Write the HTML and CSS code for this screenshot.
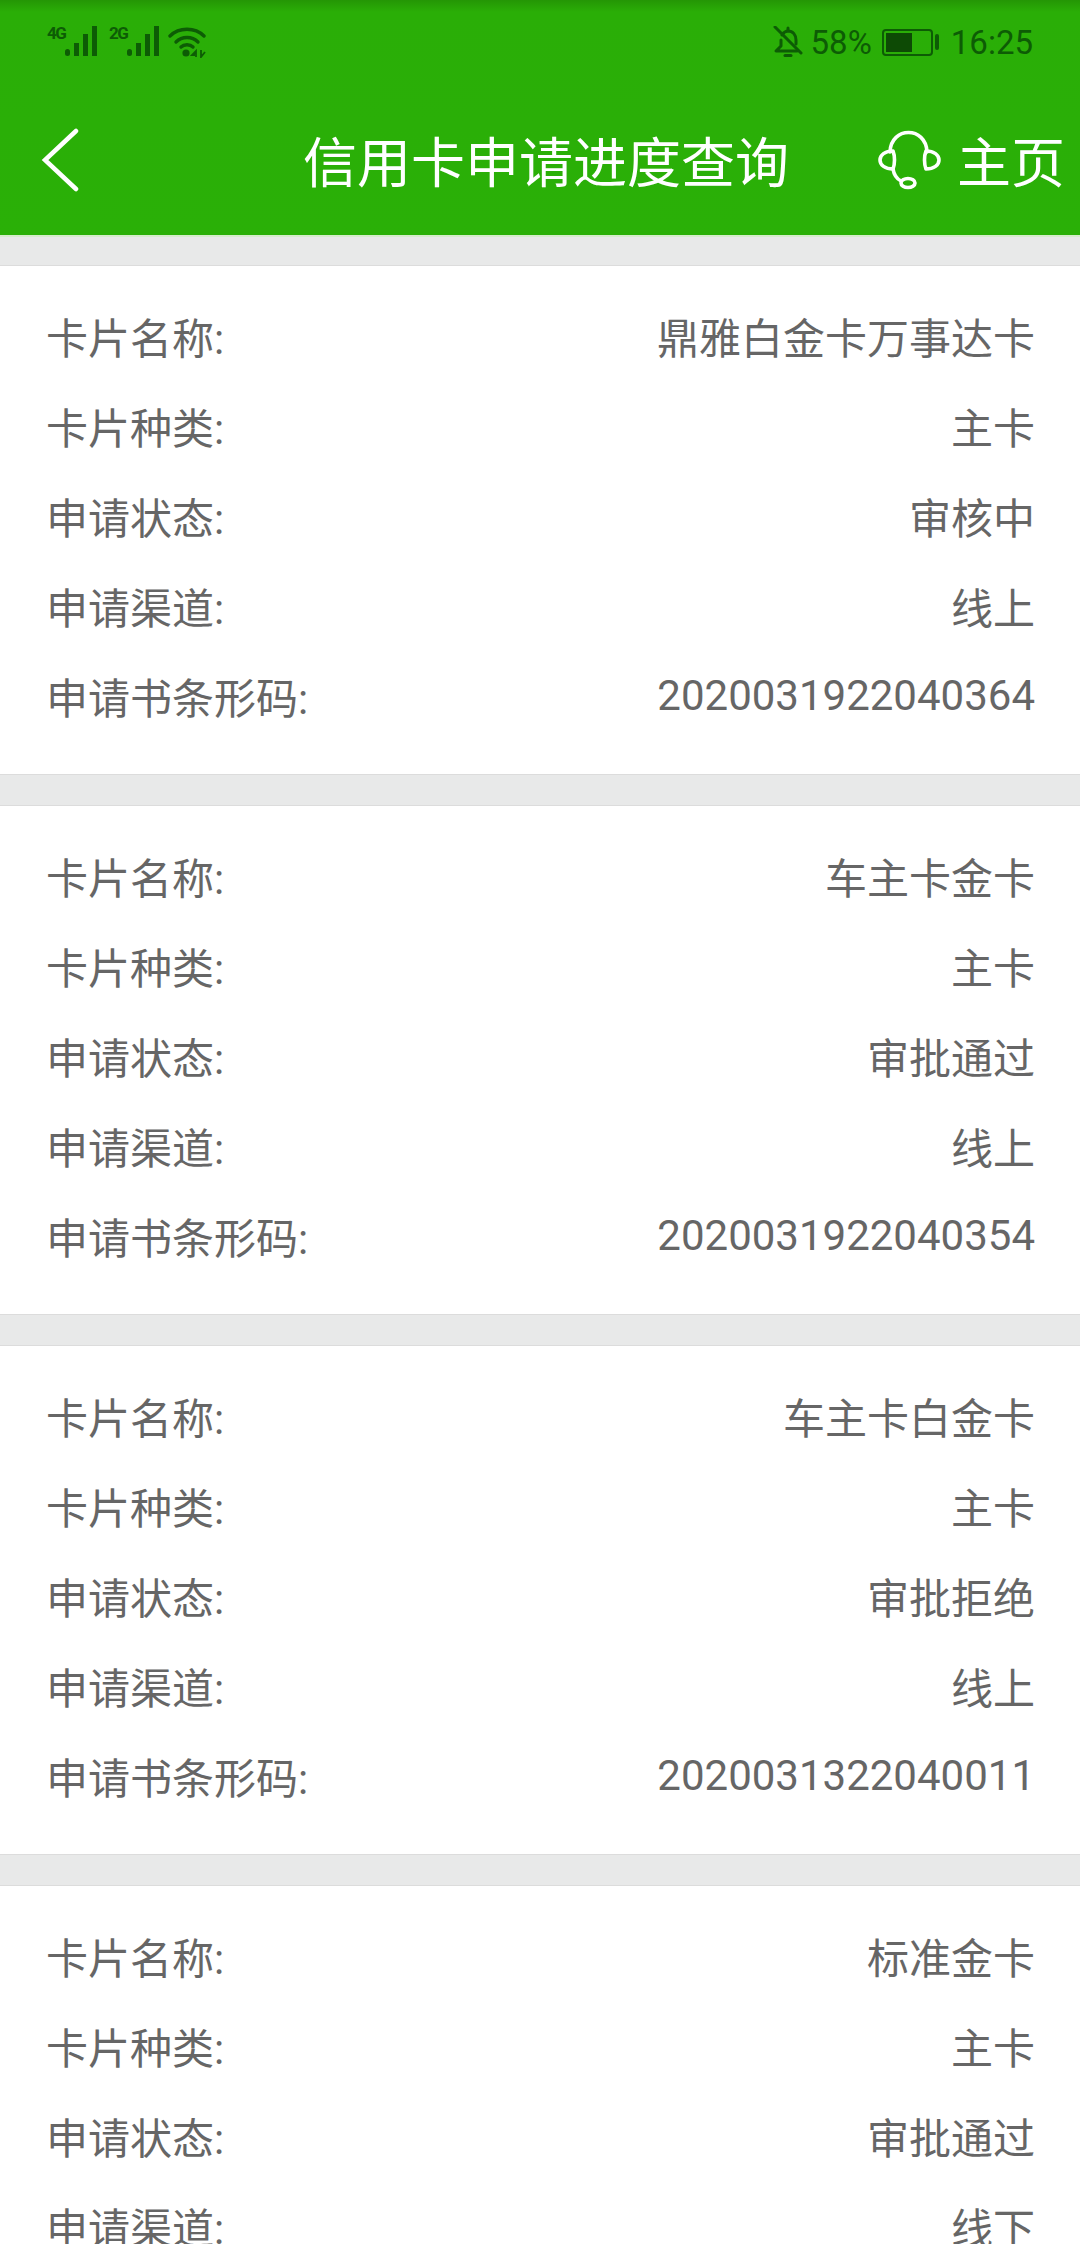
FILE: index.html
```html
<!DOCTYPE html>
<html lang="zh-CN">
<head>
    <meta charset="UTF-8">
    <meta name="viewport" content="width=device-width, initial-scale=1.0">
    <title>信用卡申请进度查询</title>
    <link rel="stylesheet" href="styles.css">
</head>
<body>

    <!-- Header -->
    <div class="header">
        <div class="status-bar">
            <div class="status-left">
                <span class="net-label">4G</span>
                <svg class="signal" width="33" height="30" viewBox="0 0 33 30"><g fill="#0d5c05"><rect x="0" y="23" width="5" height="7" rx="2.5"/><rect x="9" y="17" width="5" height="13"/><rect x="18" y="8" width="5" height="22"/><rect x="27" y="0" width="5" height="30"/></g></svg>
                <span class="net-label second">2G</span>
                <svg class="signal" width="33" height="30" viewBox="0 0 33 30"><g fill="#0d5c05"><rect x="0" y="23" width="5" height="7" rx="2.5"/><rect x="9" y="17" width="5" height="13"/><rect x="18" y="8" width="5" height="22"/><rect x="27" y="0" width="5" height="30"/></g></svg>
                <svg class="wifi" width="38" height="32" viewBox="0 0 38 32">
                    <g fill="none" stroke="#0d5c05" stroke-width="3.4" stroke-linecap="round">
                        <path d="M2 10 C11 1 27 1 36 10"/>
                        <path d="M8 16 C14 10 24 10 30 16"/>
                        <path d="M13 21 C16 18 22 18 25 21"/>
                    </g>
                    <circle cx="18" cy="27" r="3.6" fill="#0d5c05"/>
                    <path d="M28 31 L28 25 L24 29 L27 29 M33 24 L33 31 L37 26" fill="none" stroke="#0d5c05" stroke-width="1.8"/>
                </svg>
            </div>
            <div class="status-right">
                <svg class="bell" width="30" height="32" viewBox="0 0 30 32">
                    <g fill="none" stroke="#0d5c05" stroke-width="3" stroke-linecap="round" stroke-linejoin="round">
                        <path d="M9 9 C11 6 13 5 15 5 C20 5 23 9 23 14 L23 18"/>
                        <path d="M8 14 L8 20 L3 25 L24 25"/>
                        <path d="M2 1 L28 27"/>
                        <path d="M12 29.5 L18 29.5"/>
                        <path d="M15 2 L15 5"/>
                    </g>
                </svg>
                <span class="battery-text">58%</span>
                <div class="battery"><div class="battery-level"></div></div>
                <div class="battery-nub"></div>
                <span class="time">16:25</span>
            </div>
        </div>
        <div class="nav-bar">
            <svg class="back" width="40" height="64" viewBox="0 0 40 64">
                <path d="M35 3 L4 32 L35 61" fill="none" stroke="#fff" stroke-width="4.5" stroke-linecap="round"/>
            </svg>
            <div class="title">信用卡申请进度查询</div>
            <div class="home">
                <svg class="headset" width="64" height="60" viewBox="9 9 64 60">
                    <g fill="none" stroke="#fff" stroke-width="3.6" stroke-linecap="round" stroke-linejoin="round">
                        <path d="M21 31 C22 5 57 5 58 31"/>
                        <path d="M24 30 C16 30 11 34 11 39 C11 44 16 48 24 48 C26 43 26 35 24 30 Z"/>
                        <path d="M57 30 C65 30 70 34 70 39 C70 44 65 48 57 48 C55 43 55 35 57 30 Z"/>
                        <path d="M24 48 C25 54 28 58 32 60"/>
                        <ellipse cx="39" cy="62" rx="7" ry="4.5"/>
                    </g>
                </svg>
                <span>主页</span>
            </div>
        </div>
    </div>

    <!-- Cards -->
    <div class="list">
        <div class="card">
            <div class="row"><span>卡片名称:</span><span>鼎雅白金卡万事达卡</span></div>
            <div class="row"><span>卡片种类:</span><span>主卡</span></div>
            <div class="row"><span>申请状态:</span><span>审核中</span></div>
            <div class="row"><span>申请渠道:</span><span>线上</span></div>
            <div class="row"><span>申请书条形码:</span><span>2020031922040364</span></div>
        </div>
        <div class="card">
            <div class="row"><span>卡片名称:</span><span>车主卡金卡</span></div>
            <div class="row"><span>卡片种类:</span><span>主卡</span></div>
            <div class="row"><span>申请状态:</span><span>审批通过</span></div>
            <div class="row"><span>申请渠道:</span><span>线上</span></div>
            <div class="row"><span>申请书条形码:</span><span>2020031922040354</span></div>
        </div>
        <div class="card">
            <div class="row"><span>卡片名称:</span><span>车主卡白金卡</span></div>
            <div class="row"><span>卡片种类:</span><span>主卡</span></div>
            <div class="row"><span>申请状态:</span><span>审批拒绝</span></div>
            <div class="row"><span>申请渠道:</span><span>线上</span></div>
            <div class="row"><span>申请书条形码:</span><span>2020031322040011</span></div>
        </div>
        <div class="card">
            <div class="row"><span>卡片名称:</span><span>标准金卡</span></div>
            <div class="row"><span>卡片种类:</span><span>主卡</span></div>
            <div class="row"><span>申请状态:</span><span>审批通过</span></div>
            <div class="row"><span>申请渠道:</span><span>线下</span></div>
        </div>
    </div>

</body>
</html>
```

FILE: styles.css
```css
/* General Styles */
* {
    margin: 0;
    padding: 0;
    box-sizing: border-box;
    font-family: Roboto, "Noto Sans CJK SC", sans-serif;
}
html, body {
    height: 2244px;
    overflow: hidden;
}
body {
    background-color: #e8e9e9;
    color: #666;
}

/* Header */
.header {
    height: 235px;
    background: linear-gradient(#249605 0, #2aae07 12px, #2ab007 100%);
    box-shadow: 0 2px 0 #d5eccb;
}
.status-bar {
    height: 84px;
    padding: 0 47px;
    display: flex;
    justify-content: space-between;
    align-items: center;
    color: #0d5c05;
}
.status-left {
    display: flex;
    align-items: flex-start;
}
.net-label {
    font-size: 17px;
    font-weight: 700;
    line-height: 14px;
    width: 18px;
    letter-spacing: -1.5px;
}
.net-label.second {
    margin-left: 11px;
}
.wifi {
    margin-left: 8px;
}
.status-right {
    display: flex;
    align-items: center;
    font-size: 33px;
}
.battery-text {
    margin-left: 8px;
}
.battery {
    width: 51px;
    height: 27px;
    margin-left: 10px;
    padding: 2px;
    border: 2px solid #0d5c05;
    border-radius: 4px;
}
.battery-level {
    width: 26px;
    height: 100%;
    background-color: #0d4a05;
}
.battery-nub {
    width: 4px;
    height: 16px;
    margin-left: 2px;
    border-radius: 2px;
    background-color: #0d5c05;
}
.time {
    margin-left: 12px;
}

/* Nav Bar */
.nav-bar {
    height: 151px;
    padding: 0 15px 0 41px;
    display: flex;
    align-items: center;
    color: #fff;
}
.title {
    font-size: 54px;
    margin-left: 222px;
    margin-right: auto;
}
.home {
    display: flex;
    align-items: center;
    gap: 15px;
    font-size: 54px;
}

/* Cards */
.list {
    padding-top: 31px;
    display: flex;
    flex-direction: column;
    gap: 32px;
}
.card {
    background-color: #fff;
    padding: 24px 45px 34px 46px;
    box-shadow: 0 -1px 0 #dcdcdc, 0 1px 0 #dcdcdc;
}
.row {
    height: 90px;
    display: flex;
    justify-content: space-between;
    align-items: center;
    font-size: 42px;
}
```
